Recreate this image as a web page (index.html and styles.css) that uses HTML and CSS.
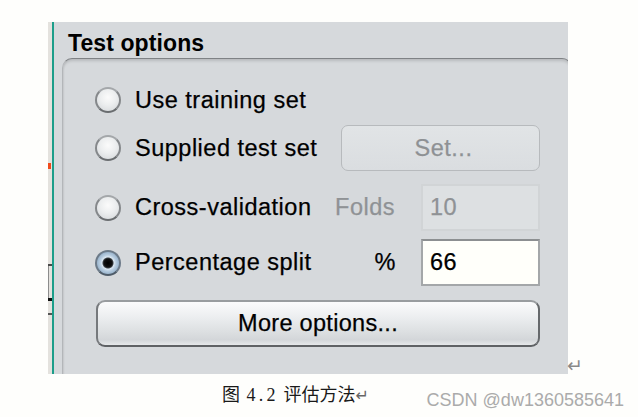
FILE: index.html
```html
<!DOCTYPE html>
<html lang="zh">
<head>
<meta charset="utf-8">
<title>Test options</title>
<link rel="stylesheet" href="styles.css">
</head>
<body>
<div class="page">
  <div class="figure-row">
    <div class="frame">
      <div class="strip">
        <span class="mark-orange"></span>
        <span class="mark-h"></span>
        <span class="mark-v"></span>
        <span class="mark-k"></span>
        <span class="mark-h2"></span>
      </div>
      <div class="panel">
        <div class="title">Test options</div>
        <div class="box">
          <div class="row r1">
            <div class="opt"><span class="radio"></span><span>Use training set</span></div>
          </div>
          <div class="row r2">
            <div class="opt"><span class="radio"></span><span>Supplied test set</span></div>
            <div class="btn-set">Set...</div>
          </div>
          <div class="row r3">
            <div class="opt"><span class="radio"></span><span>Cross-validation</span></div>
            <div class="lbl lbl-dis">Folds</div>
            <div class="field field-dis">10</div>
          </div>
          <div class="row r4">
            <div class="opt"><span class="radio radio-on"></span><span>Percentage split</span></div>
            <div class="lbl">%</div>
            <div class="field">66</div>
          </div>
          <div class="row r5">
            <div class="btn-more">More options...</div>
          </div>
        </div>
      </div>
    </div>
    <span class="pilcrow">↵</span>
  </div>
  <div class="caption-row">
    <div class="caption">图 <span class="num">4.2</span> 评估方法<span class="ret">↵</span></div>
    <div class="watermark">CSDN @dw1360585641</div>
  </div>
</div>
</body>
</html>
```

FILE: styles.css
```css
html, body {
  margin: 0;
  padding: 0;
  background: #fefefc;
}

.page {
  width: 638px;
  height: 417px;
  padding-top: 22px;
  padding-left: 48px;
  box-sizing: border-box;
  overflow: hidden;
}

.figure-row {
  display: flex;
  align-items: flex-end;
}

.frame {
  display: flex;
  height: 352px;
}

.strip {
  width: 4px;
  background: #e4e2de;
  display: flex;
  flex-direction: column;
  align-items: flex-start;
}

.mark-orange {
  margin-top: 141px;
  width: 3px;
  height: 6px;
  background: #f04a1c;
}

.mark-h {
  margin-top: 95px;
  width: 4px;
  height: 2px;
  background: #4a4a4a;
}

.mark-v {
  width: 1px;
  height: 32px;
  background: #8c8c8c;
}

.mark-k {
  width: 4px;
  height: 3px;
  background: #111;
}

.mark-h2 {
  margin-top: 12px;
  width: 4px;
  height: 2px;
  background: #555;
}

.panel {
  width: 514px;
  height: 352px;
  border-left: 2px solid #1c9e8a;
  background: #d6d9dc;
  overflow: hidden;
  font-family: "Liberation Sans", Arial, sans-serif;
  color: #000;
}

.title {
  padding-top: 8px;
  padding-left: 14px;
  margin-bottom: 2px;
  font-size: 23px;
  line-height: 26px;
  font-weight: bold;
  letter-spacing: 0.1px;
}

.box {
  margin-left: 8px;
  margin-right: -4px;
  padding: 18px 0 60px 32px;
  border: 1px solid #b3b6b9;
  border-top-color: #7f8285;
  border-radius: 10px;
  background: #d6d9dc;
  box-shadow: inset 0 3px 3px -1px rgba(0, 0, 0, 0.14), inset 2px 0 2px -1px rgba(0, 0, 0, 0.06);
}

.row {
  display: grid;
  grid-template-columns: 246px 80px 119px;
  align-items: center;
  font-size: 23.5px;
  letter-spacing: 0.5px;
  -webkit-text-stroke: 0.25px currentColor;
}

.r1 { height: 46px; }
.r2 { height: 46px; margin-top: 2px; }
.r3 { height: 47px; margin-top: 13px; }
.r4 { height: 47px; margin-top: 8px; }
.r5 { height: 47px; margin-top: 14px; }

.opt {
  display: flex;
  align-items: center;
  gap: 14px;
  white-space: nowrap;
}

.radio {
  width: 26px;
  height: 26px;
  box-sizing: border-box;
  border-radius: 50%;
  border: 2px solid #85888b;
  border-top-color: #a4a7aa;
  border-bottom-color: #6a6d70;
  background: radial-gradient(circle at 50% 38%, #fbfbfb 0, #eceeef 45%, #d2d5d8 100%);
  flex: none;
}

.radio-on {
  border-color: #6c7a88;
  border-bottom-color: #4f5c69;
  background: radial-gradient(circle at 50% 50%, #000 0, #111 4px, #3a3f44 5px, #dce8f2 6px, #b8cde0 8px, #9ab4cc 11px);
}

.btn-set {
  grid-column: 2 / 4;
  height: 46px;
  box-sizing: border-box;
  border: 1px solid #b7babd;
  border-radius: 7px;
  background: linear-gradient(#e1e4e6, #dadde0);
  color: #8e9194;
  display: flex;
  align-items: center;
  justify-content: center;
  padding-left: 6px;
}

.lbl {
  display: flex;
  justify-content: flex-end;
  white-space: nowrap;
  padding-right: 25px;
}

.lbl-dis {
  padding-right: 26px;
  color: #8f9295;
}

.field {
  height: 47px;
  box-sizing: border-box;
  border: 2px solid #a4a7a9;
  border-top-color: #8c8f91;
  background: #fffffa;
  padding-left: 7px;
  display: flex;
  align-items: center;
}

.field-dis {
  border-color: #d1d4d6;
  background: #dde0e2;
  color: #8f9295;
}

.btn-more {
  grid-column: 1 / 4;
  margin-left: 1px;
  height: 47px;
  box-sizing: border-box;
  border: 2px solid #76797c;
  border-top-color: #999c9f;
  border-right-color: #66696c;
  border-bottom-color: #5f6265;
  border-radius: 9px;
  background: linear-gradient(#fbfbfc 0, #eceef0 35%, #dcdfe1 70%, #d3d6d9 88%, #e6e8ea 100%);
  display: flex;
  align-items: center;
  justify-content: center;
  letter-spacing: 0.3px;
}

.pilcrow {
  margin-left: -1px;
  font-family: "DejaVu Sans", sans-serif;
  font-size: 19px;
  line-height: 18px;
  color: #8a8a8a;
}

.caption-row {
  display: flex;
  justify-content: space-between;
  align-items: flex-start;
  margin-left: -48px;
  padding-left: 222px;
  padding-right: 14px;
}

.caption {
  margin-top: 10px;
  font-family: "Liberation Serif", "Noto Sans CJK SC", serif;
  font-size: 18px;
  line-height: 22px;
  color: #1a1a1a;
  white-space: nowrap;
}

.num {
  margin-left: 2px;
  margin-right: 0;
  letter-spacing: 3.3px;
}

.ret {
  font-family: "DejaVu Sans", sans-serif;
  font-size: 16px;
  color: #666;
}

.watermark {
  margin-top: 15px;
  font-family: "Liberation Sans", Arial, sans-serif;
  font-size: 18px;
  line-height: 22px;
  color: #ababab;
  white-space: nowrap;
}
```
